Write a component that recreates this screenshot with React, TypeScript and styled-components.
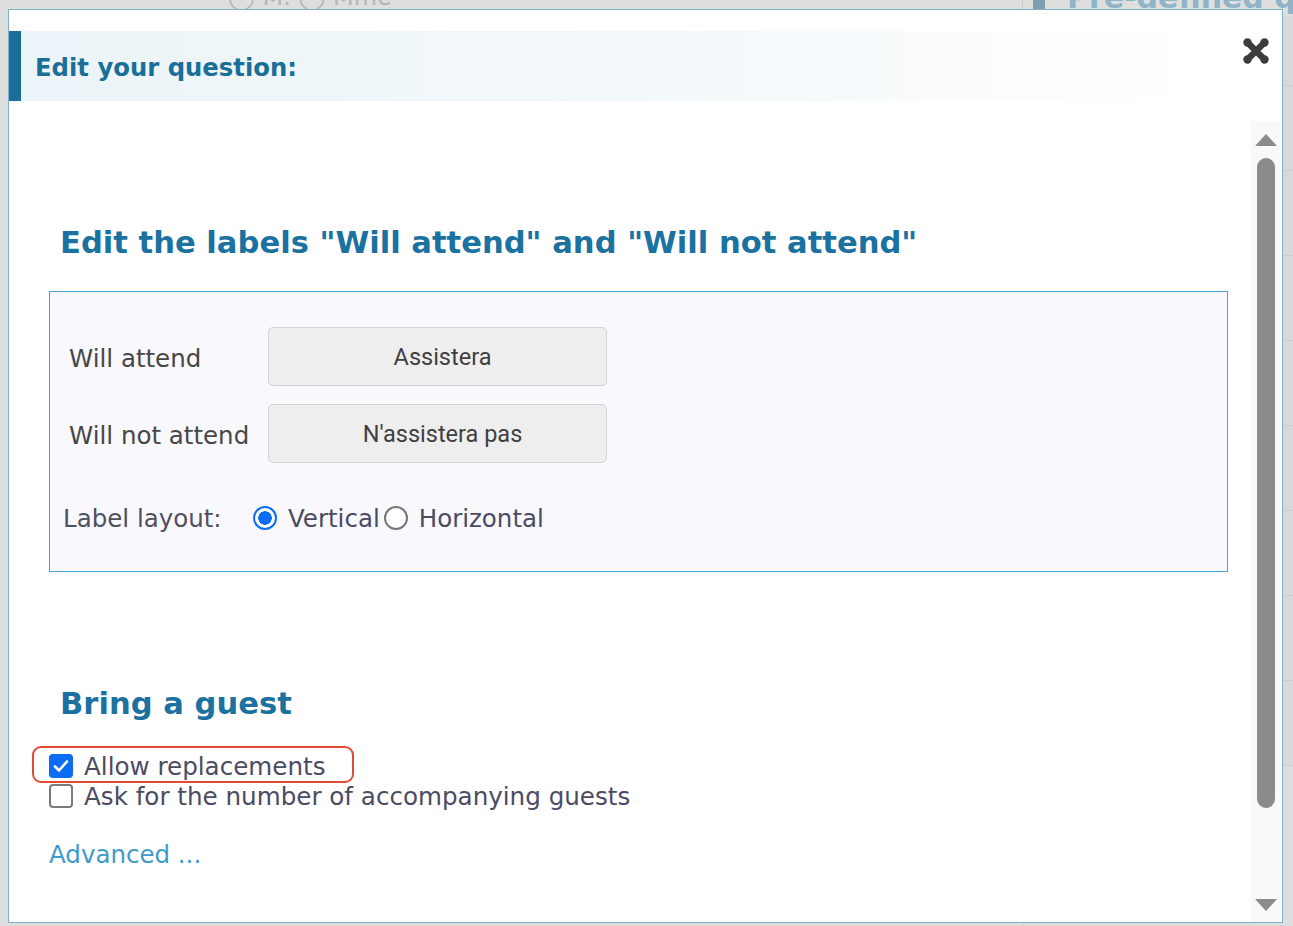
import React from 'react';
import styled, { createGlobalStyle } from 'styled-components';

const GlobalStyle = createGlobalStyle`
  html, body {
    margin: 0;
    padding: 0;
    background: #dcdcdc;
    overflow: hidden;
  }
  * {
    box-sizing: border-box;
  }
`;

const Screen = styled.div`
  position: relative;
  width: 1293px;
  height: 926px;
  overflow: hidden;
  background: #dedede;
  font-family: 'DejaVu Sans', Verdana, sans-serif;
`;

// page behind the dialog (greyed out by the overlay)
const BehindPage = styled.div`
  display: flex;
  height: 100%;
`;

const BehindMain = styled.div`
  width: 1023px;
  flex-shrink: 0;
  border-right: 1px solid #cbcbcb;
`;

const BehindTitleLine = styled.div`
  margin-top: -18px;
  padding-left: 228px;
  font-size: 24px;
  line-height: 30px;
  color: #b4b4b4;
`;

const BehindSide = styled.div`
  flex: 1;
  min-width: 0;
  overflow: hidden;
  display: flex;
  flex-direction: column;
`;

const BehindHeading = styled.div`
  display: flex;
  align-items: center;
  gap: 22px;
  margin-top: -20px;
  padding-left: 10px;
  font-weight: bold;
  font-size: 30px;
  line-height: 36px;
  color: #8fb4c8;
  white-space: nowrap;

  &::before {
    content: '';
    flex-shrink: 0;
    width: 12px;
    height: 30px;
    background: #7f9fb0;
  }
`;

const BehindRow = styled.div<{ $h: number }>`
  flex-shrink: 0;
  height: ${p => p.$h}px;
  border-bottom: 1px solid #cdcdcd;
  background: #d9d9d9;
`;

const Dialog = styled.div`
  position: absolute;
  left: 8px;
  top: 9px;
  width: 1275px;
  height: 914px;
  background: #ffffff;
  border: 1px solid #7fb0cc;
  display: flex;
  flex-direction: column;
`;

const Header = styled.div`
  margin-top: 21px;
  margin-right: 52px;
  height: 70px;
  display: flex;
  align-items: center;
  border-left: 12px solid #1a6f99;
  background: linear-gradient(to right, #ebf4f8 0%, #f3f8fa 50%, #ffffff 100%);
`;

const HeaderTitle = styled.h1`
  margin: 0;
  padding: 2px 0 0 14px;
  font-size: 24.3px;
  font-weight: bold;
  color: #1a6f99;
`;

const CloseButton = styled.button`
  position: absolute;
  left: 1232px;
  top: 26px;
  width: 30px;
  height: 30px;
  padding: 0;
  border: none;
  background: none;
  cursor: pointer;
`;

const Body = styled.div`
  flex: 1;
  display: flex;
  min-height: 0;
`;

const Content = styled.div`
  flex: 1;
  padding: 124px 23px 0 40px;
`;

const SectionTitle = styled.h2<{ $top?: number }>`
  margin: ${p => p.$top ?? 0}px 0 0 11px;
  font-size: 30.6px;
  line-height: 36px;
  font-weight: bold;
  color: #1b72a0;
  white-space: nowrap;
`;

const LabelsBox = styled.div`
  margin-top: 30px;
  border: 1px solid #4aa2d8;
  background: #f8f8fd;
  padding: 35px 0 38px;
`;

const FieldRow = styled.div`
  display: grid;
  grid-template-columns: 199px 339px;
  align-items: center;
  padding-left: 19px;
  margin-bottom: 18px;
`;

const FieldLabel = styled.label`
  padding-top: 3px;
  font-size: 24.5px;
  color: #474747;
  white-space: nowrap;
`;

const TextInput = styled.input`
  height: 59px;
  width: 339px;
  padding: 0 0 0 10px;
  border: 1px solid #d2d2d2;
  border-radius: 5px;
  background: #efeeef;
  font-family: Roboto, 'Liberation Sans', sans-serif;
  font-size: 23.5px;
  color: #3f3f3f;
  text-align: center;
  outline: none;
`;

const LayoutRow = styled.div`
  display: flex;
  align-items: center;
  margin-top: 40px;
  padding-left: 13px;
  height: 30px;
  font-size: 24.5px;
`;

const LayoutLabel = styled.span`
  width: 190px;
  color: #505060;
`;

const RadioOption = styled.label<{ $gapBefore?: number }>`
  display: inline-flex;
  align-items: center;
  gap: 11px;
  margin-left: ${p => p.$gapBefore ?? 0}px;
  color: #4b4b63;
`;

const RadioDot = styled.span<{ $on?: boolean }>`
  width: 24px;
  height: 24px;
  border-radius: 50%;
  border: ${p => (p.$on ? '2.5px solid #0b6cf5' : '2px solid #777777')};
  background: ${p =>
    p.$on ? 'radial-gradient(circle, #0b6cf5 0 6.5px, #ffffff 7px)' : '#ffffff'};
`;

const GuestList = styled.div`
  margin-top: 24px;
  display: flex;
  flex-direction: column;
  align-items: flex-start;
`;

const CheckRow = styled.label`
  display: flex;
  align-items: center;
  gap: 11px;
  height: 30px;
  font-size: 24.6px;
  color: #4b4b63;
  white-space: nowrap;
`;

const Highlight = styled.div`
  margin: 0 0 -2px -17px;
  padding: 3px 27px 0 15px;
  height: 37px;
  border: 2px solid #e24a36;
  border-radius: 9px;
`;

const Box = styled.span<{ $on?: boolean }>`
  flex-shrink: 0;
  width: 24px;
  height: 24px;
  border-radius: 4px;
  display: inline-flex;
  align-items: center;
  justify-content: center;
  background: ${p => (p.$on ? '#0b6cf5' : '#ffffff')};
  border: ${p => (p.$on ? 'none' : '2px solid #7a7a7a')};
`;

const AdvancedLink = styled.a`
  display: block;
  margin-top: 29px;
  font-size: 24.5px;
  line-height: 30px;
  color: #3d9bcb;
  text-decoration: none;
`;

const ScrollTrack = styled.div`
  width: 29px;
  margin: 20px 2px 0 0;
  background: #f9f9f9;
  display: flex;
  flex-direction: column;
  align-items: center;
  padding: 13px 0 11px;
`;

const Thumb = styled.div`
  width: 18px;
  height: 650px;
  margin-top: 12px;
  border-radius: 9px;
  background: #8b8b8b;
`;

const Arrow = styled.div<{ $down?: boolean }>`
  width: 0;
  height: 0;
  border-left: 11px solid transparent;
  border-right: 11px solid transparent;
  ${p =>
    p.$down
      ? 'border-top: 12px solid #8b8b8b; margin-top: auto;'
      : 'border-bottom: 12px solid #8b8b8b;'}
`;

function CloseIcon() {
  return (
    <svg width="30" height="30" viewBox="0 0 30 30">
      <path
        d="M7 7 L23 23 M23 7 L7 23"
        stroke="#3c3c3c"
        strokeWidth="6.5"
        strokeLinecap="round"
      />
      <g fill="#3c3c3c">
        <circle cx="6.5" cy="6.5" r="4.2" />
        <circle cx="23.5" cy="6.5" r="4.2" />
        <circle cx="6.5" cy="23.5" r="4.2" />
        <circle cx="23.5" cy="23.5" r="4.2" />
      </g>
    </svg>
  );
}

function CheckMark() {
  return (
    <svg width="18" height="18" viewBox="0 0 18 18">
      <path
        d="M3 9.5 L7 13.5 L15 4.5"
        fill="none"
        stroke="#ffffff"
        strokeWidth="2.6"
        strokeLinecap="round"
        strokeLinejoin="round"
      />
    </svg>
  );
}

export default function App() {
  return (
    <Screen>
      <GlobalStyle />
      <BehindPage>
        <BehindMain>
          <BehindTitleLine>◯ M. ◯ Mme</BehindTitleLine>
        </BehindMain>
        <BehindSide>
          <BehindHeading>Pre-defined qu</BehindHeading>
          <BehindRow $h={70} />
          <BehindRow $h={85} />
          <BehindRow $h={85} />
          <BehindRow $h={85} />
          <BehindRow $h={85} />
          <BehindRow $h={85} />
          <BehindRow $h={85} />
          <BehindRow $h={85} />
          <BehindRow $h={85} />
        </BehindSide>
      </BehindPage>

      <Dialog>
        <Header>
          <HeaderTitle>Edit your question:</HeaderTitle>
        </Header>
        <CloseButton aria-label="Close">
          <CloseIcon />
        </CloseButton>

        <Body>
          <Content>
            <SectionTitle>Edit the labels "Will attend" and "Will not attend"</SectionTitle>
            <LabelsBox>
              <FieldRow>
                <FieldLabel>Will attend</FieldLabel>
                <TextInput defaultValue="Assistera" />
              </FieldRow>
              <FieldRow>
                <FieldLabel>Will not attend</FieldLabel>
                <TextInput defaultValue="N'assistera pas" />
              </FieldRow>
              <LayoutRow>
                <LayoutLabel>Label layout:</LayoutLabel>
                <RadioOption>
                  <RadioDot $on />
                  Vertical
                </RadioOption>
                <RadioOption $gapBefore={4}>
                  <RadioDot />
                  Horizontal
                </RadioOption>
              </LayoutRow>
            </LabelsBox>

            <SectionTitle $top={114}>Bring a guest</SectionTitle>
            <GuestList>
              <Highlight>
                <CheckRow>
                  <Box $on>
                    <CheckMark />
                  </Box>
                  Allow replacements
                </CheckRow>
              </Highlight>
              <CheckRow>
                <Box />
                Ask for the number of accompanying guests
              </CheckRow>
            </GuestList>
            <AdvancedLink href="#">Advanced ...</AdvancedLink>
          </Content>

          <ScrollTrack>
            <Arrow />
            <Thumb />
            <Arrow $down />
          </ScrollTrack>
        </Body>
      </Dialog>
    </Screen>
  );
}
